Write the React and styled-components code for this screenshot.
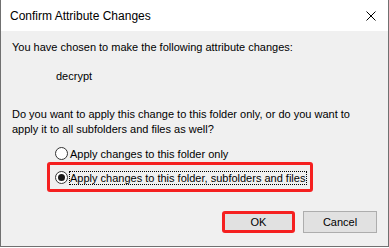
import React, { useState } from "react";
import styled, { createGlobalStyle } from "styled-components";

const GlobalStyle = createGlobalStyle`
  html, body {
    margin: 0;
    padding: 0;
    background: #ffffff;
  }
  body {
    font-family: "Liberation Sans", Arial, sans-serif;
    font-size: 11px;
    line-height: 15px;
    color: #000;
  }
`;

const Window = styled.div`
  box-sizing: border-box;
  width: 389px;
  height: 247px;
  display: flex;
  flex-direction: column;
  border: 1px solid #707070;
  border-top: none;
  background: #f0f0f0;
`;

const TitleBar = styled.div`
  height: 31px;
  flex: none;
  display: flex;
  align-items: center;
  justify-content: space-between;
  padding: 1px 12px 0 9px;
  box-sizing: border-box;
  background: #ffffff;
`;

const Title = styled.span`
  font-size: 12px;
`;

const CloseIcon = () => (
  <svg width="10" height="10" viewBox="0 0 10 10">
    <path d="M0.5 0.5 L9.5 9.5 M9.5 0.5 L0.5 9.5" stroke="#000" strokeWidth="1" />
  </svg>
);

const Body = styled.div`
  flex: 1;
  display: flex;
  flex-direction: column;
  padding: 9px 0 0 11px;
`;

const Text = styled.p`
  margin: ${(p) => p.$top || 0}px 0 0 ${(p) => p.$indent || 0}px;
`;

const Options = styled.div`
  margin-top: 9px;
  display: flex;
  flex-direction: column;
`;

const Highlight = styled.div`
  margin: 1px 0 0 35px;
  width: 266px;
  box-sizing: border-box;
  border: 3px solid #f52020;
  border-radius: 3px;
  padding: 5px 0 4px 5px;
`;

const Row = styled.label`
  display: flex;
  align-items: center;
  height: 15px;
  white-space: nowrap;
  margin-left: ${(p) => p.$indent || 0}px;
  cursor: default;
`;

const Circle = styled.span`
  box-sizing: border-box;
  flex: none;
  width: 13px;
  height: 13px;
  border: 1px solid #333;
  border-radius: 50%;
  background: #fff;
  display: flex;
  align-items: center;
  justify-content: center;
  margin-right: 1px;
  &::after {
    content: "";
    width: 7px;
    height: 7px;
    border-radius: 50%;
    background: #1a1a1a;
    display: ${(p) => (p.$checked ? "block" : "none")};
  }
`;

const Label = styled.span`
  border: 1px dotted ${(p) => (p.$focus ? "#000" : "transparent")};
  line-height: 12px;
  padding: 0 1px 0 0;
`;

const Footer = styled.div`
  display: flex;
  justify-content: flex-end;
  gap: 8px;
  margin-top: 19px;
  padding-right: 11px;
`;

const Button = styled.button`
  box-sizing: border-box;
  height: 22px;
  width: ${(p) => p.$width}px;
  font-family: "Liberation Sans", Arial, sans-serif;
  font-size: 11px;
  color: #000;
  background: #e1e1e1;
  border: ${(p) => (p.$marked ? "3px solid #f52020" : "1px solid #adadad")};
  border-radius: ${(p) => (p.$marked ? "3px" : "0")};
  padding: 0;
`;

export default function App() {
  const [choice, setChoice] = useState("all");

  return (
    <>
      <GlobalStyle />
      <Window>
        <TitleBar>
          <Title>Confirm Attribute Changes</Title>
          <CloseIcon />
        </TitleBar>
        <Body>
          <Text>You have chosen to make the following attribute changes:</Text>
          <Text $top={14} $indent={44}>decrypt</Text>
          <Text $top={23}>
            Do you want to apply this change to this folder only, or do you want to
            <br />
            apply it to all subfolders and files as well?
          </Text>
          <Options>
            <Row $indent={43} onClick={() => setChoice("folder")}>
              <Circle $checked={choice === "folder"} />
              <Label $focus={choice === "folder"}>Apply changes to this folder only</Label>
            </Row>
            <Highlight>
              <Row onClick={() => setChoice("all")}>
                <Circle $checked={choice === "all"} />
                <Label $focus={choice === "all"}>
                  Apply changes to this folder, subfolders and files
                </Label>
              </Row>
            </Highlight>
          </Options>
          <Footer>
            <Button $width={73} $marked>OK</Button>
            <Button $width={74}>Cancel</Button>
          </Footer>
        </Body>
      </Window>
    </>
  );
}
